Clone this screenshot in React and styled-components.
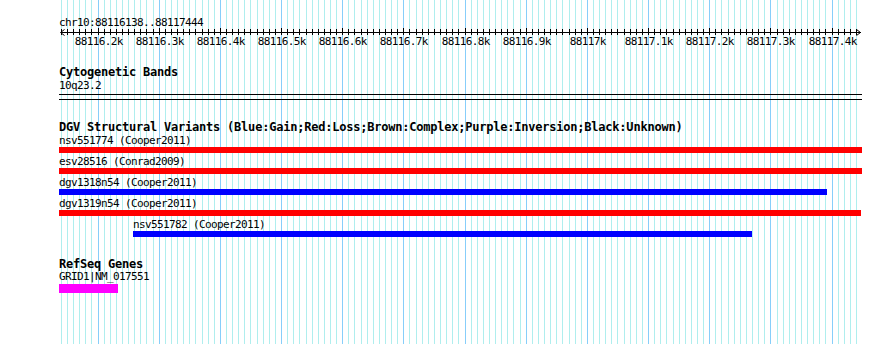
import React from 'react';
import styled, { createGlobalStyle } from 'styled-components';

const VIEW_START = 88116138;
const VIEW_END = 88117444;
const SCALE = 0.6117; // px per bp
const ORIGIN = 60.1; // page x of VIEW_START
const TRACK_LEFT = 59;
const TRACK_WIDTH = 803;
const PAGE_W = 890;
const PAGE_H = 344;

const toX = (bp) => ORIGIN + (bp - VIEW_START) * SCALE;
const clamp = (v) => Math.max(0, Math.min(TRACK_WIDTH, v));
const span = (start, end) => {
  const l = clamp(Math.floor(toX(start)) - TRACK_LEFT);
  const r = clamp(Math.floor(toX(end)) - TRACK_LEFT);
  return { left: l, width: r - l };
};

const variants = [
  { id: 'nsv551774', study: 'Cooper2011', start: 88110000, end: 88130000, color: '#ff0000' },
  { id: 'esv28516', study: 'Conrad2009', start: 88110000, end: 88130000, color: '#ff0000' },
  { id: 'dgv1318n54', study: 'Cooper2011', start: 88110000, end: 88117392, color: '#0000ff' },
  { id: 'dgv1319n54', study: 'Cooper2011', start: 88110000, end: 88117448, color: '#ff0000' },
  { id: 'nsv551782', study: 'Cooper2011', start: 88116258, end: 88117270, color: '#0000ff' },
];

const gene = { name: 'GRID1|NM_017551', start: 88000000, end: 88116233 };

const GlobalStyle = createGlobalStyle`
  html, body { margin: 0; padding: 0; background: #ffffff; }
  body { font-family: "DejaVu Sans Mono", "Liberation Mono", monospace; color: #000; }
`;

const Page = styled.div`
  position: relative;
  width: ${PAGE_W}px;
  height: ${PAGE_H}px;
  overflow: hidden;
  background: #ffffff;
`;

const GridLayer = styled.svg`
  position: absolute;
  left: 0;
  top: 0;
  z-index: 0;
`;

const Content = styled.div`
  position: relative;
  z-index: 1;
  display: flex;
  flex-direction: column;
  width: ${PAGE_W}px;
`;

const Mono = styled.div`
  font-family: "DejaVu Sans Mono", "Liberation Mono", monospace;
  font-size: 11px;
  letter-spacing: -0.62px;
  white-space: nowrap;
  color: #000;
`;

const Location = styled(Mono)`
  margin-top: 17px;
  padding-left: ${TRACK_LEFT}px;
  line-height: 11px;
`;

const RulerSvg = styled.svg`
  display: block;
  flex: none;
`;

const TrackTitle = styled.div`
  margin-top: ${(p) => p.$gap}px;
  padding-left: ${TRACK_LEFT}px;
  font-family: "DejaVu Sans Mono", "Liberation Mono", monospace;
  font-weight: bold;
  font-size: 12px;
  letter-spacing: -0.22px;
  line-height: 13px;
  white-space: nowrap;
`;

const TrackLabel = styled(Mono)`
  padding-left: ${TRACK_LEFT}px;
  line-height: 13px;
`;

const BandBox = styled.div`
  margin-top: 2px;
  margin-left: ${TRACK_LEFT}px;
  width: ${TRACK_WIDTH}px;
  height: 6px;
  box-sizing: border-box;
  border-top: 1px solid #000;
  border-bottom: 1px solid #000;
`;

const FeatureRow = styled.div`
  display: flex;
  padding-left: ${TRACK_LEFT}px;
  margin-bottom: ${(p) => p.$gap}px;
`;

const Feature = styled.div`
  display: flex;
  flex-direction: column;
  flex: none;
`;

const FeatureLabel = styled(Mono)`
  position: relative;
  z-index: 1;
  line-height: ${(p) => p.$lh}px;
  overflow: visible;
`;

const Bar = styled.div`
  margin-top: ${(p) => p.$offset || 0}px;
  height: ${(p) => p.$h}px;
  background: ${(p) => p.$color};
`;

function Grid() {
  const lines = [];
  for (let bp = 88116140; bp <= VIEW_END; bp += 10) {
    const x = Math.floor(toX(bp)) + 0.5;
    const major = bp % 100 === 0;
    lines.push(
      <line key={bp} x1={x} x2={x} y1={0} y2={PAGE_H} stroke={major ? '#87cefa' : '#afeeee'} strokeWidth={1} />
    );
  }
  return (
    <GridLayer width={PAGE_W} height={PAGE_H} shapeRendering="crispEdges">
      {lines}
    </GridLayer>
  );
}

function fmt(bp) {
  const k = bp / 1000;
  const s = Number.isInteger(k) ? String(k) : k.toFixed(1);
  return `${s}k`;
}

function Ruler() {
  const ticks = [];
  const labels = [];
  for (let bp = 88116140; bp <= VIEW_END; bp += 10) {
    const x = Math.floor(toX(bp)) + 0.5;
    const major = bp % 100 === 0;
    ticks.push(<line key={bp} x1={x} x2={x} y1={major ? 0 : 1} y2={7} stroke="#000" />);
    if (major) {
      labels.push(
        <text
          key={`l${bp}`}
          x={x + 0.3}
          y={17}
          textAnchor="middle"
          fontFamily={'"DejaVu Sans Mono", "Liberation Mono", monospace'}
          fontSize="11"
          letterSpacing="-0.62"
          fill="#000"
        >
          {fmt(bp)}
        </text>
      );
    }
  }
  const y = 4.5;
  const left = 60.5;
  const right = 860.5;
  return (
    <RulerSvg width={PAGE_W} height={21}>
      <g shapeRendering="crispEdges">
        <line x1={left} x2={right} y1={y} y2={y} stroke="#000" />
        {ticks}
      </g>
      <polyline points={`${left + 4},${y - 3} ${left},${y} ${left + 4},${y + 3}`} fill="none" stroke="#000" />
      <polyline points={`${right - 4},${y - 3} ${right},${y} ${right - 4},${y + 3}`} fill="none" stroke="#000" />
      {labels}
    </RulerSvg>
  );
}

export default function App() {
  const g = span(gene.start, gene.end);
  return (
    <>
      <GlobalStyle />
      <Page>
        <Grid />
        <Content>
          <Location>chr10:{VIEW_START}..{VIEW_END}</Location>
          <Ruler />

          <TrackTitle $gap={17}>Cytogenetic Bands</TrackTitle>
          <TrackLabel>10q23.2</TrackLabel>
          <BandBox />

          <TrackTitle $gap={21}>
            DGV Structural Variants (Blue:Gain;Red:Loss;Brown:Complex;Purple:Inversion;Black:Unknown)
          </TrackTitle>
          {variants.map((v) => {
            const s = span(v.start, v.end);
            return (
              <FeatureRow key={v.id} $gap={2}>
                <Feature style={{ marginLeft: s.left, width: s.width }}>
                  <FeatureLabel $lh={13}>
                    {v.id} ({v.study})
                  </FeatureLabel>
                  <Bar $h={6} $color={v.color} />
                </Feature>
              </FeatureRow>
            );
          })}

          <TrackTitle $gap={19}>RefSeq Genes</TrackTitle>
          <FeatureRow $gap={0}>
            <Feature style={{ marginLeft: g.left, width: g.width }}>
              <FeatureLabel $lh={11}>{gene.name}</FeatureLabel>
              <Bar $h={9} $offset={2} $color="#ff00ff" />
            </Feature>
          </FeatureRow>
        </Content>
      </Page>
    </>
  );
}
